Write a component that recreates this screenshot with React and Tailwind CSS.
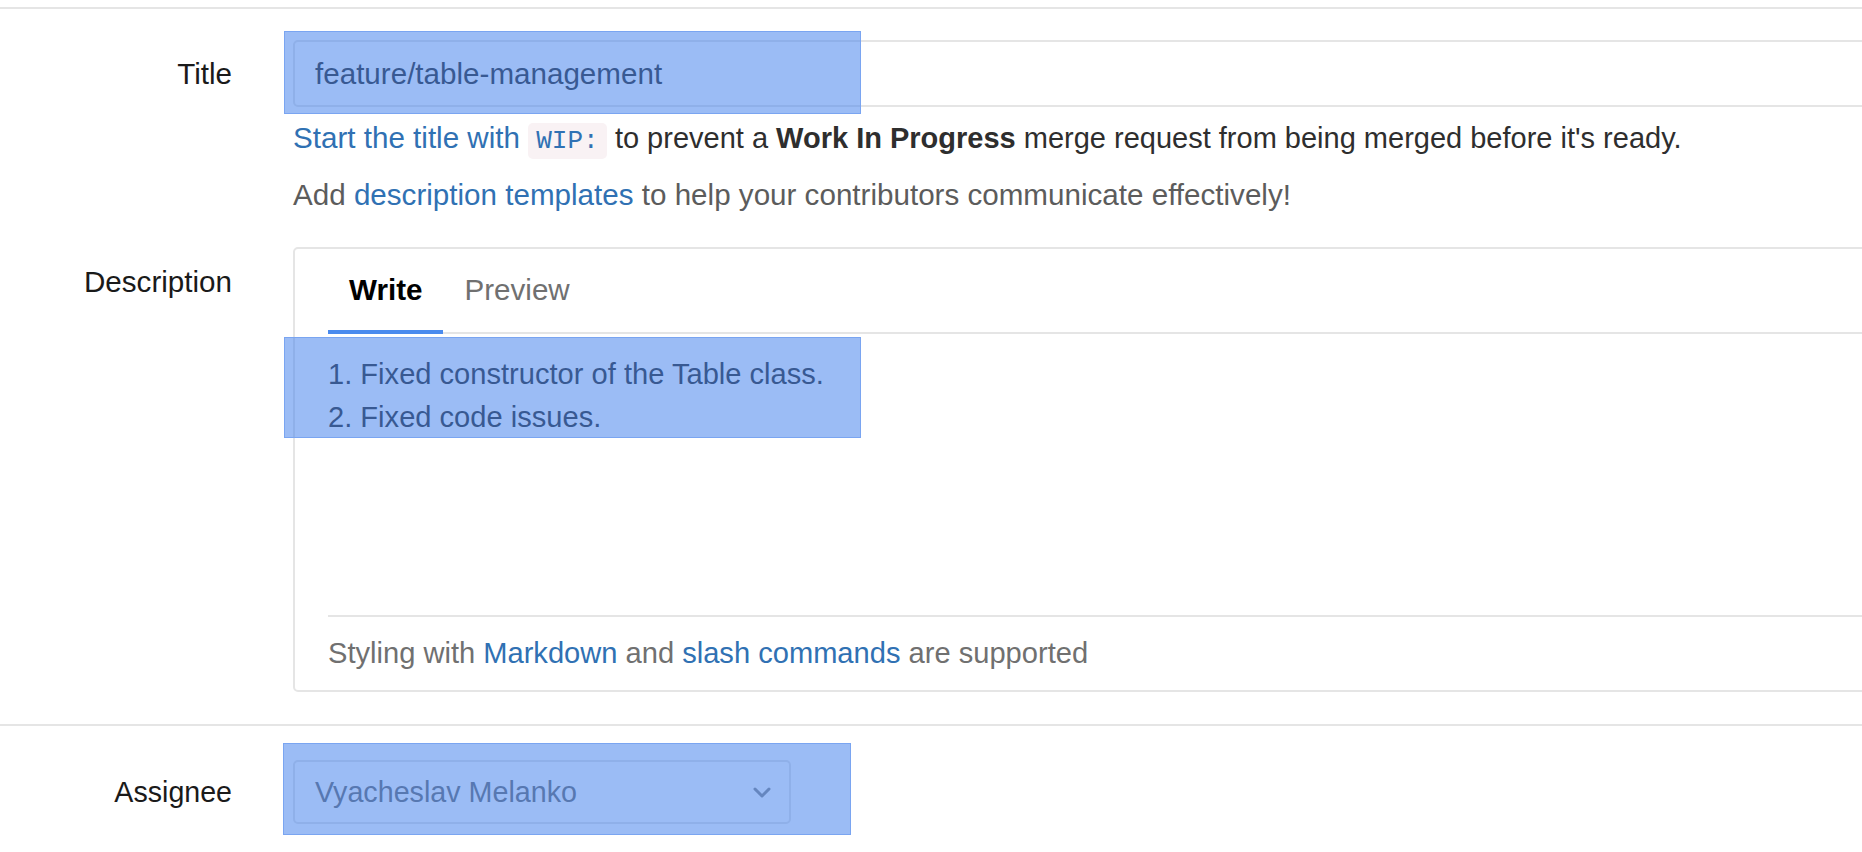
import React from "react";

function Highlight({ className }) {
  return (
    <div
      className={
        "pointer-events-none absolute border border-[#7aa5f1] bg-[rgba(66,129,236,0.53)] " +
        className
      }
    />
  );
}

export default function App() {
  return (
    <div className="relative h-[852px] w-full overflow-hidden bg-white font-['Liberation_Sans',Arial,sans-serif] text-[29.6px] text-[#2e2e2e]">
      <div className="h-[7px]" />
      <div className="h-[2px] bg-[#e5e5e5]" />

      {/* Title row */}
      <div className="mt-[31px] flex">
        <div className="w-[232px] shrink-0 text-right leading-[67px] text-[#1a1a1a]">Title</div>
        <div className="ml-[61px] min-w-0 flex-1">
          <div className="-mr-[10px] h-[67px] rounded-[5px] border-2 border-[#e5e5e5] pl-[20px] leading-[63px] text-[#2e2e2e]">
            feature/table-management
          </div>
          <p className="mt-[11px] whitespace-nowrap leading-[40px] text-[#2e2e2e]">
            <span className="text-[#3071b3]">Start the title with</span>{" "}
            <code className="rounded-[5px] bg-[#f9f2f4] px-[8px] py-[3px] font-['Liberation_Mono',monospace] text-[26px] text-[#3071b3]">
              WIP:
            </code>{" "}
            <span className="text-[29px]">
              to prevent a <b className="font-bold">Work In Progress</b> merge request from being
              merged before it's ready.
            </span>
          </p>
          <p className="mt-[14px] whitespace-nowrap leading-[40px] text-[#5c5c5c]">
            Add <span className="text-[#3071b3]">description templates</span> to help your
            contributors communicate effectively!
          </p>
        </div>
      </div>

      {/* Description row */}
      <div className="mt-[32px] flex">
        <div className="w-[232px] shrink-0 pt-[15px] text-right leading-[40px] text-[#1a1a1a]">
          Description
        </div>
        <div className="ml-[61px] min-w-0 flex-1">
          <div className="-mr-[60px] rounded-[5px] border-2 border-[#e5e5e5] px-[33px] pt-[21px]">
            <div className="flex border-b-2 border-[#e5e5e5]">
              <div className="-mb-[2px] border-b-4 border-[#4a8bee] px-[21px] pb-[20px] font-bold leading-[40px] text-black">
                Write
              </div>
              <div className="px-[21px] pb-[20px] leading-[40px] text-[#707070]">Preview</div>
            </div>
            <div className="h-[281px] pt-[19px] text-[29.1px] leading-[43px] text-[#2e2e2e]">
              <div>1. Fixed constructor of the Table class.</div>
              <div>2. Fixed code issues.</div>
            </div>
            <div className="border-t-2 border-[#e5e5e5] pb-[17px] pt-[16px] text-[29.1px] leading-[40px] text-[#707070]">
              Styling with <span className="text-[#3071b3]">Markdown</span> and{" "}
              <span className="text-[#3071b3]">slash commands</span> are supported
            </div>
          </div>
        </div>
      </div>

      <div className="mt-[32px] h-[2px] bg-[#e5e5e5]" />

      {/* Assignee row */}
      <div className="mt-[34px] flex">
        <div className="w-[232px] shrink-0 text-right text-[28.6px] leading-[64px] text-[#1a1a1a]">
          Assignee
        </div>
        <div className="ml-[61px] flex h-[64px] w-[498px] items-center justify-between rounded-[5px] border-2 border-[#e5e5e5] pl-[20px] pr-[18px] text-[#707070]">
          <span className="text-[28.7px] leading-[40px]">Vyacheslav Melanko</span>
          <svg width="18" height="11" viewBox="0 0 18 11" fill="none">
            <polyline
              points="2,2 9,9 16,2"
              stroke="#8c8c8c"
              strokeWidth="3"
              strokeLinecap="round"
              strokeLinejoin="round"
            />
          </svg>
        </div>
      </div>

      <Highlight className="left-[284px] top-[31px] h-[83px] w-[577px]" />
      <Highlight className="left-[284px] top-[337px] h-[101px] w-[577px]" />
      <Highlight className="left-[283px] top-[743px] h-[92px] w-[568px]" />
    </div>
  );
}
